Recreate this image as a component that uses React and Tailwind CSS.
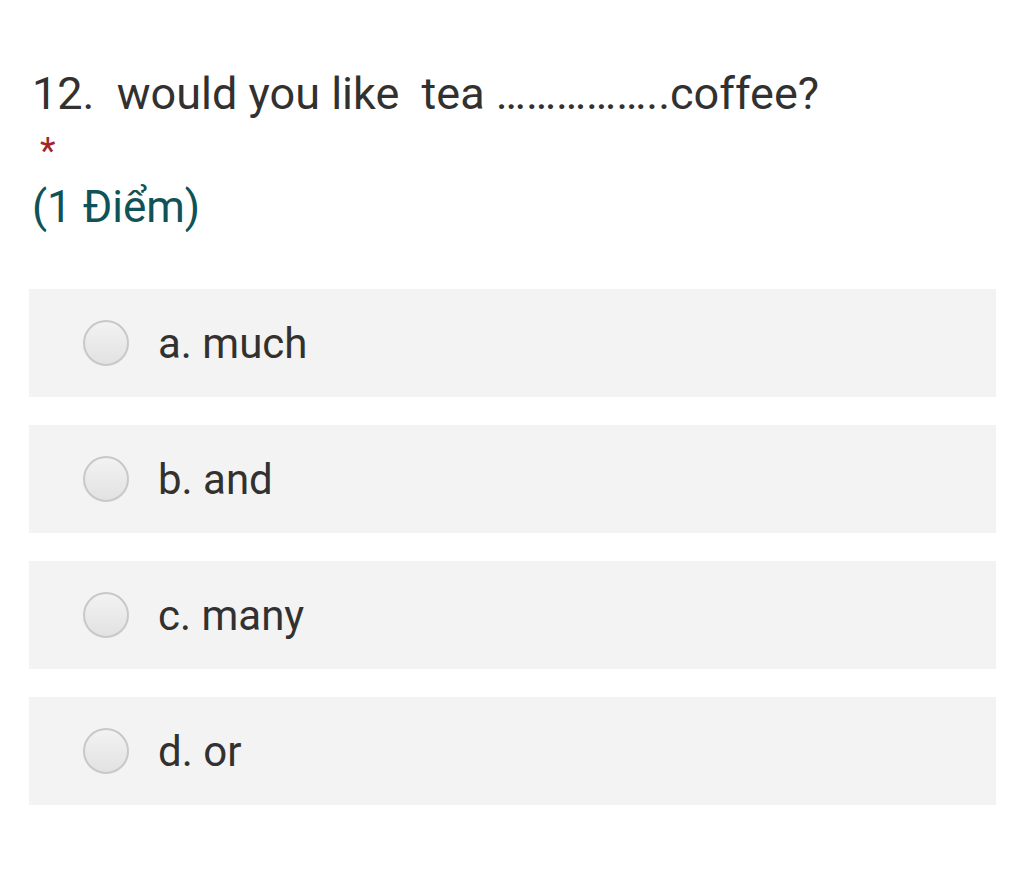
import React from 'react';

const options = ['a. much', 'b. and', 'c. many', 'd. or'];

export default function App() {
  return (
    <div className="min-h-[876px] bg-white pt-[62px] font-['Roboto','Liberation_Sans',sans-serif]">
      <div className="pl-[32px] pr-[28px]">
        <div className="text-[45px] leading-[64px] text-[#323130] whitespace-pre">
          {'12.  would you like  tea ……………..coffee?'}
        </div>
        <div className="mt-[5px] pl-[8px] text-[36px] leading-[40px] h-[44px] text-[#a4262c]">*</div>
        <div className="mt-[4px] text-[44px] leading-[56px] text-[#0f5257]">(1 Điểm)</div>
      </div>

      <div className="mt-[54px] pl-[29px] pr-[28px] flex flex-col gap-[28px]">
        {options.map((o) => (
          <label key={o} className="h-[108px] bg-[#f3f3f3] flex items-center pl-[54px] cursor-pointer">
            <span className="w-[46px] h-[46px] rounded-full border-2 border-[#c8c8c8] bg-gradient-to-b from-[#f2f2f2] to-[#e2e2e2] shrink-0" />
            <span className="ml-[29px] text-[42px] text-[#323130]">{o}</span>
          </label>
        ))}
      </div>
    </div>
  );
}
